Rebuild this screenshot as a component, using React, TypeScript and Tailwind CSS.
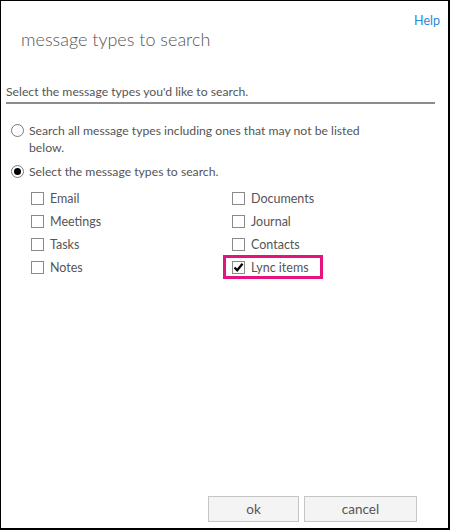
import React from "react";

const font = { fontFamily: 'Lato, "Open Sans", "Liberation Sans", sans-serif' };

function Radio({ checked }: { checked?: boolean }) {
  return (
    <span className="w-[13px] h-[13px] rounded-full border border-[#7a7a7a] bg-white flex items-center justify-center shrink-0">
      {checked && <span className="w-[7px] h-[7px] rounded-full bg-black" />}
    </span>
  );
}

function Box({ checked }: { checked?: boolean }) {
  return (
    <span className="w-[13px] h-[13px] border border-[#8a8a8a] bg-white flex items-center justify-center shrink-0">
      {checked && (
        <svg width="11" height="11" viewBox="0 0 11 11">
          <path d="M1.5 5.5 L4.2 8.3 L9.5 1.8" fill="none" stroke="#000" strokeWidth="2.2" />
        </svg>
      )}
    </span>
  );
}

function Item({ label, checked, highlight }: { label: string; checked?: boolean; highlight?: boolean }) {
  return (
    <div className="relative h-[23px] flex items-center gap-[6px]">
      <Box checked={checked} />
      <span className="text-[12.5px] leading-[17px] text-[#555]">{label}</span>
      {highlight && (
        <span className="absolute left-[-9px] top-[-1px] w-[100px] h-[24px] border-[3px] border-[#e3147f]" />
      )}
    </div>
  );
}

export default function App() {
  return (
    <div
      className="w-[450px] h-[530px] bg-white border-l border-t border-r-2 border-b-2 border-black flex flex-col"
      style={font}
    >
      <div className="flex justify-between items-start">
        <div className="mt-[24px] ml-[20px] text-[18px] leading-[28px] font-light text-[#555]">
          message types to search
        </div>
        <div className="mt-[12px] mr-[8px] text-[12.5px] leading-[16px] text-[#2b88d8]">Help</div>
      </div>
      <div className="mt-[30px] ml-[5px] text-[12.2px] leading-[18px] text-[#555]">
        Select the message types you'd like to search.
      </div>
      <div className="mt-[1px] ml-[5px] w-[429px] h-[2px] bg-[#8c8c8c]" />
      <div className="mt-[18px] ml-[10px] flex items-start gap-[5px]">
        <span className="mt-[2px]">
          <Radio />
        </span>
        <span className="w-[335px] text-[12.2px] leading-[17px] text-[#555]">
          Search all message types including ones that may not be listed below.
        </span>
      </div>
      <div className="mt-[7px] ml-[10px] flex items-center gap-[5px]">
        <Radio checked />
        <span className="text-[12.2px] leading-[17px] text-[#555]">Select the message types to search.</span>
      </div>
      <div className="mt-[7px] ml-[30px] grid grid-cols-[201px_1fr]">
        <div className="flex flex-col">
          <Item label="Email" />
          <Item label="Meetings" />
          <Item label="Tasks" />
          <Item label="Notes" />
        </div>
        <div className="flex flex-col">
          <Item label="Documents" />
          <Item label="Journal" />
          <Item label="Contacts" />
          <Item label="Lync items" checked highlight />
        </div>
      </div>
      <div className="mt-auto mb-[6px] mr-[31px] flex justify-end gap-[5px]">
        <button className="w-[91px] h-[26px] border border-[#c6c6c6] bg-[#f4f4f4] text-[13.5px] text-[#555]">
          ok
        </button>
        <button className="w-[113px] h-[26px] border border-[#c6c6c6] bg-[#f4f4f4] text-[13.5px] text-[#555]">
          cancel
        </button>
      </div>
    </div>
  );
}
